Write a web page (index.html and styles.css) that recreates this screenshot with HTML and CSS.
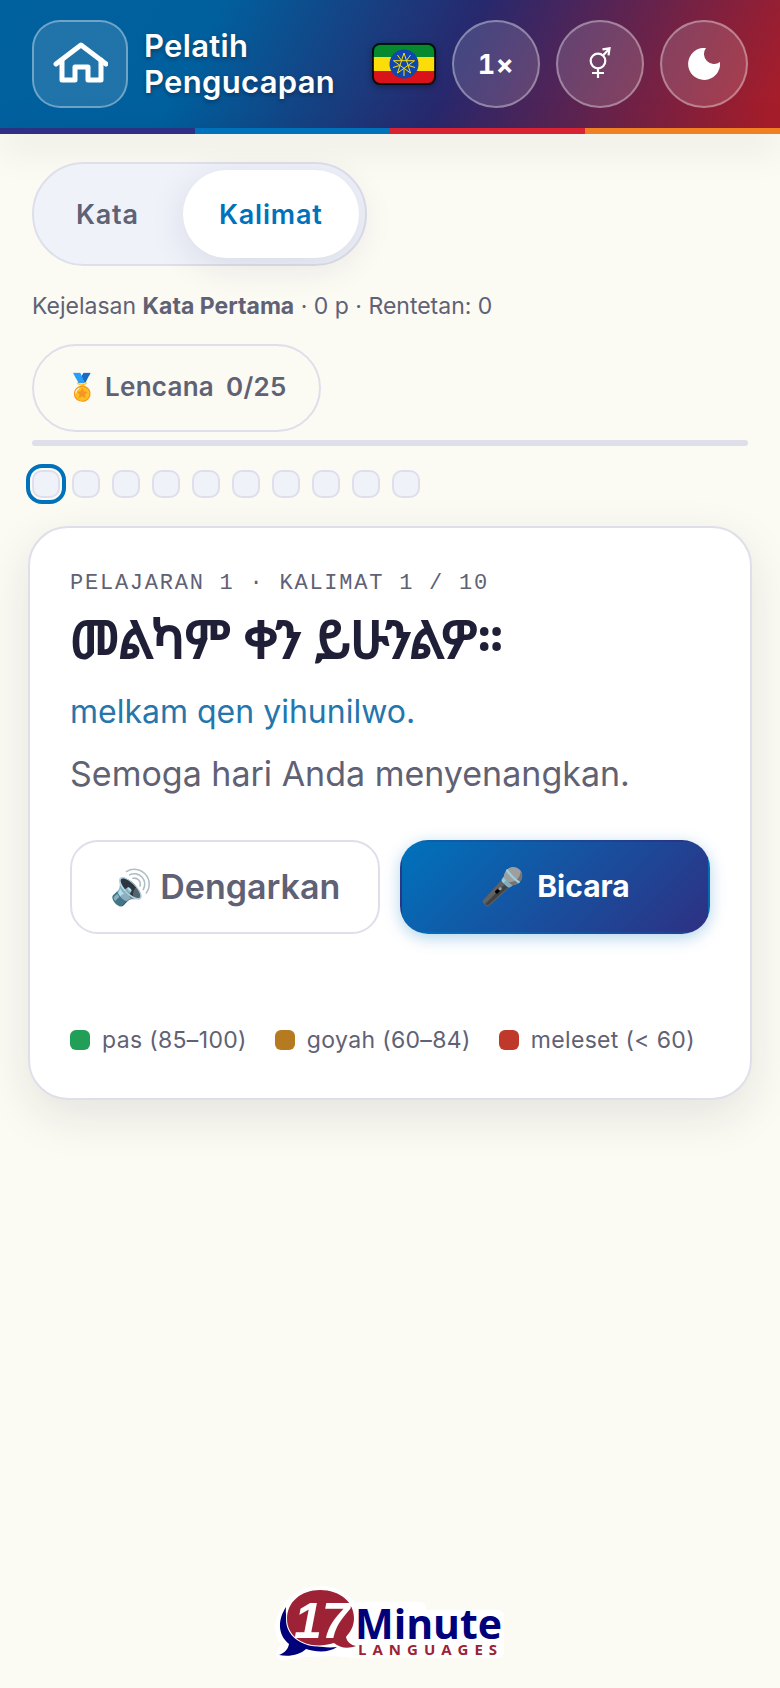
FILE: index.html
```html
<!DOCTYPE html>
<html lang="id">
<head>
    <meta charset="UTF-8">
    <meta name="viewport" content="width=device-width, initial-scale=1.0">
    <title>Pelatih Pengucapan</title>
    <link rel="stylesheet" href="styles.css">
</head>
<body>

    <header class="topbar">
        <a class="home-btn" href="#" aria-label="Beranda">
            <svg viewBox="0 0 56 56" width="56" height="56" fill="none" stroke="#fff" stroke-linecap="round" stroke-linejoin="round">
                <path stroke-width="5" d="M4 28 29 9l25 19"/>
                <path stroke-width="5" d="M10 24v20h13V31h13v13h13V24"/>
            </svg>
        </a>
        <h1 class="title">Pelatih Pengucapan</h1>
        <svg class="flag" viewBox="0 0 64 42" width="64" height="42" role="img" aria-label="Amharik">
            <clipPath id="flag-clip"><rect x="1" y="1" width="62" height="40" rx="7"/></clipPath>
            <g clip-path="url(#flag-clip)">
                <rect width="64" height="14" fill="#078930"/>
                <rect y="14" width="64" height="14" fill="#fcdd09"/>
                <rect y="28" width="64" height="14" fill="#da121a"/>
            </g>
            <circle cx="32" cy="21" r="14.500" fill="#0f47af"/>
            <g fill="none" stroke="#fcdd09" stroke-width="1">
                <path d="M32 10 38.500 30 21.500 17.700H42.500L25.500 30Z"/>
                <path d="M35 16.900 38.500 12M37 22.600 43 24.500M32 26.200V33M27 22.600 21 24.500M29 16.900 25.500 12"/>
            </g>
            <rect x="1" y="1" width="62" height="40" rx="7" fill="none" stroke="#000" stroke-opacity=".8" stroke-width="2"/>
        </svg>
        <button class="round-btn speed" type="button">1×</button>
        <button class="round-btn" type="button" aria-label="Suara">
            <svg viewBox="0 0 32 40" width="32" height="40" fill="none" stroke="#fff" stroke-width="2.200">
                <circle cx="14" cy="17" r="7.300"/>
                <path d="M19 11.500 25 5M18.500 5.300 25.500 4.300 24.500 11.300M14 24v10M8 29h12"/>
            </svg>
        </button>
        <button class="round-btn" type="button" aria-label="Mode gelap">
            <svg viewBox="0 0 32 32" width="32" height="32" fill="#fff">
                <path d="M18 0A10 10 0 0 0 32 14 16 16 0 1 1 18 0Z"/>
            </svg>
        </button>
    </header>
    <div class="stripes"><i></i><i></i><i></i><i></i></div>

    <main class="page">
        <div class="segmented">
            <button class="segment" type="button">Kata</button>
            <button class="segment active" type="button">Kalimat</button>
        </div>

        <p class="stats">Kejelasan <strong>Kata Pertama</strong> · 0 p · Rentetan: 0</p>

        <button class="badges" type="button"><span>🏅 Lencana</span><span>0/25</span></button>

        <div class="progress"></div>

        <div class="dots">
            <button class="dot current" type="button" aria-label="Kalimat 1"></button>
            <button class="dot" type="button" aria-label="Kalimat 2"></button>
            <button class="dot" type="button" aria-label="Kalimat 3"></button>
            <button class="dot" type="button" aria-label="Kalimat 4"></button>
            <button class="dot" type="button" aria-label="Kalimat 5"></button>
            <button class="dot" type="button" aria-label="Kalimat 6"></button>
            <button class="dot" type="button" aria-label="Kalimat 7"></button>
            <button class="dot" type="button" aria-label="Kalimat 8"></button>
            <button class="dot" type="button" aria-label="Kalimat 9"></button>
            <button class="dot" type="button" aria-label="Kalimat 10"></button>
        </div>

        <section class="card">
            <div class="eyebrow">Pelajaran 1 · Kalimat 1 / 10</div>
            <h2 class="phrase" lang="am">መልካም ቀን ይሁንልዎ።</h2>
            <p class="translit">melkam qen yihunilwo.</p>
            <p class="meaning">Semoga hari Anda menyenangkan.</p>
            <div class="actions">
                <button class="btn listen" type="button">🔊 Dengarkan</button>
                <button class="btn speak" type="button"><span class="mic">🎤</span><span>Bicara</span></button>
            </div>
            <ul class="legend">
                <li><span class="swatch good"></span>pas (85–100)</li>
                <li><span class="swatch fair"></span>goyah (60–84)</li>
                <li><span class="swatch miss"></span>meleset (&lt; 60)</li>
            </ul>
        </section>
    </main>

    <footer class="footer">
        <svg class="logo" viewBox="0 0 240 80" width="240" height="80" role="img" aria-label="17 Minute Languages">
            <!-- white halo behind the bubbles and the name -->
            <g fill="#fff" stroke="#fff" stroke-width="12" stroke-linejoin="round">
                <ellipse cx="50" cy="36" rx="35" ry="28"/>
                <path d="M16 28C6 44 14 56 18 60L12 70 34 67 66 66 84 68H228V32H150V24H96Z"/>
            </g>
            <path fill="#00007b" d="M16 23C8 35 7 50 19 60 18 66 14 69 9 71 19 73 30 71 36 65 48 69 60 68 67 63 42 66 13 52 16 23Z"/>
            <path fill="#9d2235" stroke="#fff" stroke-width="2" paint-order="stroke" d="M50 6C70 6 84 18 84 34 84 43 80 48 76 53 77 58 81 61 86 62 78 65 70 64 64 59 38 67 17 54 17 35 17 18 31 6 50 6Z"/>
            <text class="logo-number" x="24" y="54">17</text>
            <text class="logo-name" x="85" y="55">Minute</text>
            <text class="logo-sub" x="88" y="71">LANGUAGES</text>
        </svg>
    </footer>

</body>
</html>
```
FILE: styles.css
```css
:root {
    --bg: #fbfaf3;
    --surface: #fff;
    --soft: #eff2f9;
    --line: #dfdfeb;
    --ink: #1f1f38;
    --muted: #5f6175;
    --blue: #0072bc;
    --indigo: #2e3083;
    --red: #d92332;
    --orange: #ef8123;
}

* {
    box-sizing: border-box;
}

body {
    margin: 0;
    min-height: 100vh;
    display: flex;
    flex-direction: column;
    background: var(--bg);
    color: var(--ink);
    font-family: Inter, "Noto Sans", sans-serif;
}

button {
    font-family: inherit;
    cursor: pointer;
}

/* Header */
.topbar {
    display: flex;
    align-items: center;
    gap: 16px;
    padding: 20px 32px;
    background: linear-gradient(115deg, #00619f 0%, #00609e 26%, #28286d 58%, #a61d2a 98%);
}

.home-btn {
    display: flex;
    align-items: center;
    justify-content: center;
    flex: none;
    width: 96px;
    height: 88px;
    border: 2px solid rgba(255, 255, 255, 0.35);
    border-radius: 28px;
    background: rgba(255, 255, 255, 0.12);
}

.title {
    flex: 1;
    margin: 0;
    font-size: 31px;
    font-weight: 600;
    line-height: 36px;
    letter-spacing: 0.01em;
    color: #fff;
    text-shadow: 0 2px 4px rgba(0, 0, 0, 0.35);
}

.flag {
    flex: none;
    filter: drop-shadow(0 2px 3px rgba(0, 0, 0, 0.35));
}

.round-btn {
    display: flex;
    align-items: center;
    justify-content: center;
    flex: none;
    width: 88px;
    height: 88px;
    padding: 0;
    border: 2px solid rgba(255, 255, 255, 0.35);
    border-radius: 50%;
    background: rgba(255, 255, 255, 0.14);
    color: #fff;
}

.round-btn.speed {
    font-size: 27px;
    font-weight: 700;
    font-variant-numeric: tabular-nums;
    letter-spacing: 0.03em;
}

.stripes {
    display: flex;
    height: 6px;
    box-shadow: 0 8px 36px rgba(0, 0, 0, 0.26);
}

.stripes i {
    flex: 1;
    background: var(--indigo);
}

.stripes i:nth-child(2) { background: var(--blue); }
.stripes i:nth-child(3) { background: var(--red); }
.stripes i:nth-child(4) { background: var(--orange); }

/* Page */
.page {
    flex: 1;
    display: flex;
    flex-direction: column;
    align-items: flex-start;
    padding: 28px 32px;
}

.segmented {
    display: flex;
    gap: 8px;
    padding: 6px;
    border: 2px solid var(--line);
    border-radius: 52px;
    background: var(--soft);
}

.segment {
    height: 88px;
    padding: 0 36px;
    border: 0;
    border-radius: 44px;
    background: none;
    color: var(--muted);
    font-size: 27px;
    font-weight: 600;
    letter-spacing: 0.03em;
}

.segment.active {
    background: var(--surface);
    color: var(--blue);
    box-shadow: 0 8px 36px rgba(30, 30, 60, 0.1);
}

.stats {
    margin: 24px 0 22px;
    color: var(--muted);
    font-size: 23px;
    line-height: 32px;
}

.badges {
    display: flex;
    align-items: center;
    gap: 12px;
    height: 88px;
    padding: 0 32px 4px;
    border: 2px solid var(--line);
    border-radius: 44px;
    background: none;
    color: var(--muted);
    font-size: 26px;
    font-weight: 600;
    letter-spacing: 0.01em;
}

.progress {
    align-self: stretch;
    height: 6px;
    margin: 8px 0 24px;
    border-radius: 3px;
    background: var(--line);
}

.dots {
    display: flex;
    gap: 12px;
    margin-bottom: 28px;
}

.dot {
    width: 28px;
    height: 28px;
    padding: 0;
    border: 2px solid var(--line);
    border-radius: 10px;
    background: var(--soft);
}

.dot.current {
    outline: 4px solid var(--blue);
    outline-offset: 2px;
}

/* Practice card */
.card {
    align-self: stretch;
    margin: 0 -4px;
    padding: 40px;
    border: 2px solid var(--line);
    border-radius: 40px;
    background: var(--surface);
    box-shadow: 0 16px 48px rgba(30, 30, 40, 0.1);
}

.eyebrow {
    color: var(--muted);
    font-family: "Liberation Mono", monospace;
    font-size: 22px;
    line-height: 32px;
    letter-spacing: 0.08em;
    text-transform: uppercase;
}

.phrase {
    margin: 0;
    font-family: "Noto Sans Ethiopic", "Noto Sans", sans-serif;
    font-size: 52px;
    font-weight: 400;
    line-height: 76px;
    -webkit-text-stroke: 2px var(--ink);
}

.translit {
    margin: 12px 0 0;
    color: #2476ac;
    font-size: 32px;
    line-height: 48px;
}

.meaning {
    margin: 12px 0 40px;
    color: var(--muted);
    font-size: 34px;
    line-height: 52px;
}

.actions {
    display: grid;
    grid-template-columns: 1fr 1fr;
    gap: 20px;
}

.btn {
    display: flex;
    align-items: center;
    justify-content: center;
    gap: 12px;
    height: 94px;
    padding: 0 24px 2px;
    border: 2px solid var(--line);
    border-radius: 28px;
    background: var(--surface);
    color: var(--muted);
    font-size: 34px;
    font-weight: 600;
}

.btn.speak {
    border-color: transparent;
    background: linear-gradient(135deg, var(--blue), var(--indigo));
    box-shadow: 0 4px 16px rgba(0, 114, 188, 0.3);
    color: #fff;
    font-size: 30px;
    font-weight: 700;
}

.mic {
    font-size: 36px;
}

.legend {
    display: flex;
    flex-wrap: wrap;
    gap: 28px;
    margin: 90px 0 0;
    padding: 0 0 2px;
    list-style: none;
    color: var(--muted);
    font-size: 23px;
    line-height: 32px;
    letter-spacing: 0.015em;
}

.legend li {
    display: flex;
    align-items: center;
    gap: 12px;
}

.swatch {
    width: 20px;
    height: 20px;
    border-radius: 6px;
}

.swatch.good { background: #219f56; }
.swatch.fair { background: #b67b20; }
.swatch.miss { background: #bf392b; }

/* Footer */
.footer {
    display: flex;
    justify-content: center;
    padding: 0 32px 24px;
}

.logo-number {
    fill: #fff;
    font: italic 700 50px "Liberation Sans", sans-serif;
}

.logo-name {
    fill: #00007b;
    font: 700 41px "Open Sans", sans-serif;
}

.logo-sub {
    fill: #9d2235;
    font: 700 15px "Open Sans", sans-serif;
    letter-spacing: 6px;
}
```
